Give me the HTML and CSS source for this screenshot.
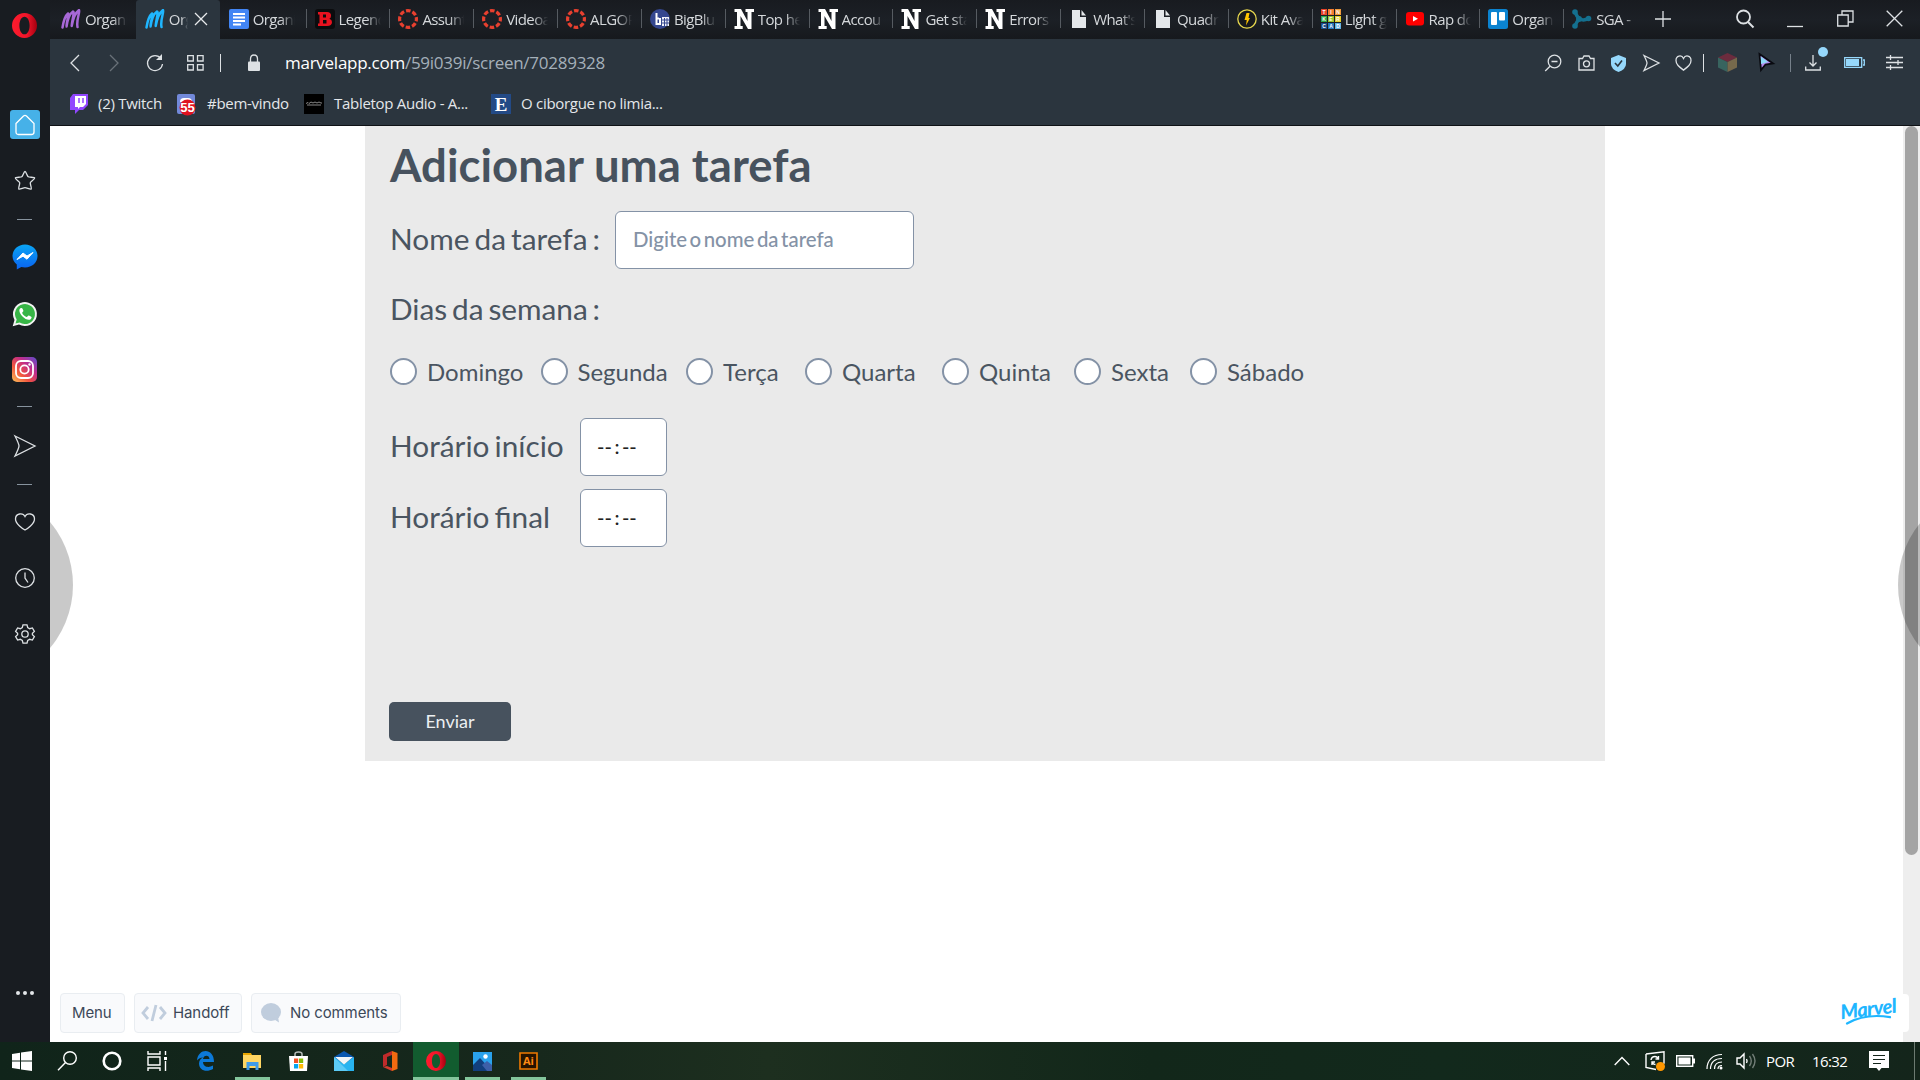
FILE: index.html
```html
<!DOCTYPE html>
<html lang="pt">
<head>
<meta charset="utf-8">
<title>Adicionar uma tarefa</title>
<link rel="stylesheet" href="styles.css">
</head>
<body>
<svg class="defs" width="0" height="0">
  <defs>
    <linearGradient id="ig" x1="0" y1="1" x2="1" y2="0"><stop offset="0" stop-color="#fdc45a"/><stop offset=".35" stop-color="#f0533f"/><stop offset=".65" stop-color="#c02c8c"/><stop offset="1" stop-color="#5a4fd0"/></linearGradient>
    <linearGradient id="ms" x1="0" y1="0" x2="0" y2="1"><stop offset="0" stop-color="#0aa5f5"/><stop offset="1" stop-color="#0a62f0"/></linearGradient>
    <linearGradient id="op" x1="0" y1="0" x2="1" y2="0"><stop offset="0" stop-color="#ff1b2d"/><stop offset=".6" stop-color="#f0152a"/><stop offset="1" stop-color="#a5000f"/></linearGradient>
    <symbol id="m" viewBox="0 0 20 20"><path d="M1.500 18.500C2.500 12 4 7 7 4.500c1.500 0-1.500 8-1.500 13C6.500 11 8.500 5 12 2.500c1.800 0-1 9-1.300 14.500C12 10 14 4 18 1c1.500.5-3 10-1.500 17" fill="none" stroke="currentColor" stroke-width="2.500" stroke-linecap="round" stroke-linejoin="round"/></symbol>
    <symbol id="canvas" viewBox="0 0 20 20"><circle cx="10" cy="10" r="8.400" fill="none" stroke="#e8402f" stroke-width="3.200" stroke-dasharray="4.600 2" stroke-dashoffset="2.300"/></symbol>
    <symbol id="n" viewBox="0 0 20 20"><path d="M.5 0H7l6.500 12V3h-2V0H20v3h-2.500v17H14L6.500 7v10h2.200v3H.5v-3H3V3H.5z" fill="#fff"/></symbol>
    <symbol id="file" viewBox="0 0 20 20"><path d="M3 1h8v7h6v11H3z" fill="#e4e7ea"/><path d="M12.500 1 17 6.500h-4.500z" fill="#e4e7ea"/></symbol>
    <symbol id="opera" viewBox="0 0 24 24"><path fill-rule="evenodd" d="M12 0a12 12 0 1 0 0 24 12 12 0 0 0 0-24zm0 3.500c3 0 4.900 3.800 4.900 8.500S15 20.500 12 20.500 7.100 16.700 7.100 12 9 3.500 12 3.500z" fill="url(#op)"/></symbol>
    <symbol id="send" viewBox="0 0 24 24"><path d="M2 2l20 10L2 22c2.500-5 4-8 4-10S4.500 7 2 2z"/></symbol>
    <symbol id="heart" viewBox="0 0 24 24"><path d="M12 21.500C6 17 2 14 2 8.500 2 2 9.500.5 12 6c2.500-5.500 10-4 10 2.500 0 5.500-4 8.500-10 13z"/></symbol>
  </defs>
</svg>
<div class="window">
  <aside class="side">
    <svg class="opera-logo" viewBox="0 0 24 24"><use href="#opera"/></svg>
    <div class="home"><svg class="ln" width="20" height="22" viewBox="0 0 20 22"><path d="M1 9.500 8.500 2Q10 .8 11.500 2L19 9.500V18q0 2.500-2.500 2.500h-13Q1 20.500 1 18z"/></svg></div>
    <svg class="ln star" width="22" height="22" viewBox="0 0 22 22"><path d="M11 1.500c1 0 2.200 4.600 3.200 5.300 1 .7 6.200.2 6.500 1.200.3 1-4 3.400-4.400 4.600-.4 1.200 1.700 5.900.8 6.500-.9.500-4.700-1.500-6.100-1.500s-5.200 2-6.100 1.500c-.9-.6 1.200-5.300.8-6.500C5.300 11.400 1 9 1.300 8c.3-1 5.500-.5 6.500-1.200 1-.7 2.200-5.300 3.200-5.300z"/></svg>
    <i class="dash d1"></i>
    <svg class="msg" width="26" height="26" viewBox="0 0 26 26"><path d="M13 .5C6 .5.500 5.500.500 12c0 3.500 1.700 6.500 4.300 8.500V25.500l4.500-2.500c1.200.3 2.400.5 3.700.5 7 0 12.500-5 12.500-11.500S20 .5 13 .5z" fill="url(#ms)"/><path d="M5 15.500 11 9l4 3 6-3.500-6 6.700-4-3z" fill="#fff" stroke="#fff"/></svg>
    <svg class="wa" width="26" height="26" viewBox="0 0 26 26"><path d="M.7 25.300 2.500 19A12 12 0 1 1 7 23.500z" fill="#f2f2f2"/><path d="M3.500 22.500 4.700 18.600a10 10 0 1 1 3 2.900z" fill="#37b546"/><path d="M9 7c-3 1-1.500 5.500 1.500 8.500s7.500 5 9 1.500c.4-1-.3-1.500-2.500-2.500-1.200-.5-1.500 1.800-2.500 1.500-2-.7-3.800-2.500-4.300-4 0-.9 1.500-1.300 1.200-2.200C11 8.500 10.500 6.700 9 7z" fill="#fff"/></svg>
    <svg class="insta" width="25" height="25" viewBox="0 0 25 25"><rect width="25" height="25" rx="5" fill="url(#ig)"/><g fill="none" stroke="#fff" stroke-width="1.800"><rect x="4" y="4" width="17" height="17" rx="5"/><circle cx="12.500" cy="12.500" r="4.200"/></g><circle cx="17.500" cy="7.500" r="1.200" fill="#fff"/></svg>
    <i class="dash d2"></i>
    <svg class="ln sd" width="24" height="24"><use href="#send"/></svg>
    <i class="dash d3"></i>
    <svg class="ln ht" width="22" height="20" viewBox="0 0 22 20"><path d="M11 18C9 17 1.500 12 1.500 7 1.500 1 9 .5 11 4.500 13 .5 20.500 1 20.500 7c0 5-7.500 10-9.500 11z"/></svg>
    <svg class="ln ck" width="22" height="22" viewBox="0 0 22 22"><circle cx="11" cy="11" r="9.300"/><path d="M11 5.500V11l3 4.500"/></svg>
    <svg class="ln gr" width="22" height="22" viewBox="0 0 22 22"><circle cx="11" cy="11" r="3.200"/><path d="M9 1.800h4l.7 2.700 2 1.200 2.700-.8 2 3.500-2 1.900v1.400l2 1.900-2 3.500-2.700-.8-2 1.200-.7 2.700H9l-.7-2.700-2-1.200-2.700.8-2-3.500 2-1.900v-1.400l-2-1.900 2-3.500 2.700.8 2-1.200z"/></svg>
    <svg class="dots" width="20" height="6" viewBox="0 0 20 6"><g fill="#e3e6e9"><circle cx="3" cy="3" r="2"/><circle cx="10" cy="3" r="2"/><circle cx="17" cy="3" r="2"/></g></svg>
  </aside>
  <div class="main">
    <header class="tabs">
      <div class="tab purple"><svg><use href="#m"/></svg><span>Organi</span></div>
      <div class="tab active"><svg><use href="#m"/></svg><span>Org</span><svg class="x" viewBox="0 0 14 14"><path d="M1 1l12 12M13 1 1 13" stroke="#e8eaec" stroke-width="1.300"/></svg></div>
      <div class="tab"><svg viewBox="0 0 20 20"><rect width="20" height="20" rx="2" fill="#4285f4"/><path d="M4 5h12M4 8.500h12M4 12h12M4 15.500h8" stroke="#fff" stroke-width="1.800"/></svg><span>Organi</span></div>
      <div class="tab sep"><svg viewBox="0 0 20 20"><rect width="20" height="20" rx="3" fill="#0b0c0e"/><path fill-rule="evenodd" d="M3 3h9q4 0 4 3.700 0 2.300-1.600 3Q17 10.500 17 13q0 4-5 4H3v-2.500h1.500v-9H3zm5 2.500v3h3V5.500zm0 5.500v3.500h3.500V11z" fill="#e8121f"/></svg><span>Legend</span></div>
      <div class="tab sep"><svg><use href="#canvas"/></svg><span>Assunt</span></div>
      <div class="tab sep"><svg><use href="#canvas"/></svg><span>Videoa</span></div>
      <div class="tab sep"><svg><use href="#canvas"/></svg><span>ALGOR</span></div>
      <div class="tab sep"><svg viewBox="0 0 20 20"><circle cx="10" cy="10" r="10" fill="#35478f"/><path d="M6.500 4v11h3.500V9M6.500 9.500H9" stroke="#fff" stroke-width="2" fill="none"/><path d="M12 8h7v9h-7z" fill="#f0f2fa"/><path d="M12 11h7M12 14h7M14.500 9v8M17 9v8" stroke="#35478f"/></svg><span>BigBlu</span></div>
      <div class="tab sep"><svg><use href="#n"/></svg><span>Top he</span></div>
      <div class="tab sep"><svg><use href="#n"/></svg><span>Accou</span></div>
      <div class="tab sep"><svg><use href="#n"/></svg><span>Get sta</span></div>
      <div class="tab sep"><svg><use href="#n"/></svg><span>Errors</span></div>
      <div class="tab sep"><svg><use href="#file"/></svg><span>What's</span></div>
      <div class="tab sep"><svg><use href="#file"/></svg><span>Quadr</span></div>
      <div class="tab sep"><svg viewBox="0 0 20 20"><circle cx="10" cy="10" r="9.200" fill="#17191c" stroke="#e6d74e" stroke-width="1.300"/><path d="M9.500 4h3L11.500 9H13l-4 7.500.7-5.500H7.500z" fill="#ffc400"/></svg><span>Kit Ava</span></div>
      <div class="tab sep"><svg viewBox="0 0 20 20"><path fill="#e8452b" d="M0 0h6v6H0z"/><path fill="#f47b30" d="M7 0h6v6H7z"/><path fill="#f19a3c" d="M14 0h6v6h-6z"/><path fill="#2fa84b" d="M0 7h6v6H0z"/><path fill="#9cc62f" d="M7 7h6v6H7z"/><path fill="#e4d02c" d="M14 7h6v6h-6z"/><path fill="#174d8c" d="M0 14h6v6H0z"/><path fill="#2277bd" d="M7 14h6v6H7z"/><path fill="#5fb2e2" d="M14 14h6v6h-6z"/><g class="tk"><text x="3" y="5">T</text><text x="10" y="5">I</text><text x="17" y="5">N</text><text x="3" y="12">K</text><text x="10" y="12">E</text><text x="17" y="12">R</text><text x="3" y="19">C</text><text x="10" y="19">A</text><text x="17" y="19">D</text></g></svg><span>Light g</span></div>
      <div class="tab sep"><svg viewBox="0 0 20 20"><rect x="1" y="3" width="18" height="13.500" rx="3" fill="#f00"/><path d="M8 7l5 2.800-5 2.800z" fill="#fff"/></svg><span>Rap do</span></div>
      <div class="tab sep"><svg viewBox="0 0 20 20"><rect width="20" height="20" rx="2.500" fill="#0b83d0"/><rect x="3" y="3" width="6" height="13" rx="1" fill="#fff"/><rect x="11" y="3" width="6" height="8.500" rx="1" fill="#fff"/></svg><span>Organi</span></div>
      <div class="tab sep"><svg viewBox="0 0 20 20"><path d="M3 3q2 5 4.500 7Q5 12 3 17M7.500 10Q12 12 16 9.500" stroke="#14708f" stroke-width="3.500" fill="none"/><g fill="#14708f"><circle cx="3" cy="3" r="2.800"/><circle cx="3" cy="17" r="2.800"/><circle cx="7" cy="10" r="3"/><circle cx="16.500" cy="9.500" r="2.800"/></g></svg><span>SGA -</span></div>
      <div class="controls">
        <svg class="ln" width="16" height="16" viewBox="0 0 16 16"><path d="M8 0v16M0 8h16"/></svg>
        <b></b>
        <svg class="ln" width="20" height="20" viewBox="0 0 20 20"><circle cx="8.500" cy="8" r="6.500" stroke-width="1.800"/><path d="M13 13l5.500 5.500" stroke-width="2"/></svg>
        <svg class="ln" width="16" height="16" viewBox="0 0 16 16"><path d="M0 15.500h16"/></svg>
        <svg class="ln" width="17" height="17" viewBox="0 0 17 17"><path d="M.7 5h10.500v11H.7zM5 5V1h11v11h-4.500"/></svg>
        <svg class="ln" width="17" height="17" viewBox="0 0 17 17"><path d="M.7.700l15.600 15.600M16.300.700.700 16.300"/></svg>
      </div>
    </header>
    <nav class="bar">
      <svg class="ln" width="12" height="18" viewBox="0 0 12 18"><path d="M10 1 2 9l8 8"/></svg>
      <svg class="ln off" width="12" height="18" viewBox="0 0 12 18"><path d="M2 1l8 8-8 8"/></svg>
      <svg class="ln" width="18" height="18" viewBox="0 0 18 18"><path d="M15 4.500A7.500 7.500 0 1 0 16.500 10"/><path d="M16 0v6h-6z" fill="#dde1e4" stroke="none"/></svg>
      <svg class="ln" width="17" height="16" viewBox="0 0 17 16"><path d="M.7.700h5.600v5.300H.7zM10.500.700h5.600v5.300h-5.600zM.7 9.700h5.600V15H.7zM10.500 9.700h5.600V15h-5.600z"/></svg>
      <i class="vl"></i>
      <svg width="14" height="18" viewBox="0 0 14 18"><path d="M3.500 8V5q0-4 3.500-4t3.500 4v3" fill="none" stroke="#dde1e4" stroke-width="1.300"/><rect x="1" y="7.500" width="12" height="9.500" rx="1" fill="#dde1e4"/></svg>
      <div class="url">marvelapp.com<em>/59i039i/screen/70289328</em></div>
      <div class="ext">
        <svg class="ln" width="18" height="18" viewBox="0 0 18 18"><circle cx="10.500" cy="7.500" r="6.300"/><path d="M6 12.200 1.200 17M7.500 7.500h6"/></svg>
        <svg class="ln" width="17" height="16" viewBox="0 0 17 16"><path d="M1 3.500h3.500L6 1h5l1.500 2.500H16V15H1z"/><circle cx="8.500" cy="8.800" r="3"/></svg>
        <svg class="shield" width="15" height="17" viewBox="0 0 15 17"><path d="M7.500 0 15 3v6q0 5-7.500 8Q0 14 0 9V3z" fill="#96d8fb"/><path d="M4 8l2.800 3L11 5.500" fill="none" stroke="#2b353e" stroke-width="1.600"/></svg>
        <svg class="ln fat" width="19" height="18"><use href="#send"/></svg>
        <svg class="ln fat" width="19" height="18"><use href="#heart"/></svg>
        <i class="vl"></i>
        <svg width="19" height="19" viewBox="0 0 19 19"><path d="M9.500 0 19 4.500 9.500 9 0 4.500z" fill="#6c2c3e"/><path d="M0 4.500 9.500 9v10L0 14.500z" fill="#38645f"/><path d="M19 4.500 9.500 9v10l9.500-4.500z" fill="#76694c"/></svg>
        <svg class="cur" width="18" height="20" viewBox="0 0 18 20"><path d="M2.500 2 16 11.500 8.500 12.500 4 18z" fill="#b58bf0" stroke="#090a10" stroke-width="1.800"/><path d="M3.800 4.500 11 10l-7 2z" fill="#8fdcf8"/></svg>
        <i class="vl dim"></i>
        <div class="dl"><svg class="ln" width="16" height="16" viewBox="0 0 16 16"><path d="M8 0v11M4.500 7.500 8 11l3.500-3.500M.7 11.500V15h14.600v-3.500"/></svg><i></i></div>
        <svg width="21" height="11" viewBox="0 0 21 11"><path d="M.7.700h17v9.600H.7zM19 3h1.300v5H19" fill="none" stroke="#96d8fb" stroke-width="1.300"/><path d="M2 2h13v7H2z" fill="#96d8fb"/></svg>
        <svg class="ln" width="17" height="15" viewBox="0 0 17 15"><path d="M0 2.500h17M0 7.500h17M0 12.500h17M4.500 0v5M12 5v5M4.500 10v5"/></svg>
      </div>
    </nav>
    <nav class="marks">
      <div class="mk k1"><svg width="19" height="20" viewBox="0 0 19 20"><path d="M4 0h15v11l-5 5h-4l-4 4v-4H1V4z" fill="#9147ff"/><path d="M6 2h11v8l-3 3h-3l-2 2v-2H6z" fill="#fff"/><path d="M10 4v5M14 4v5" stroke="#9147ff" stroke-width="1.500"/></svg><span>(2) Twitch</span></div>
      <div class="mk k2"><svg width="20" height="20" viewBox="0 0 20 20"><rect width="18" height="20" rx="2" fill="#7289da"/><path d="M3 8q0-4 4-4h4q4 0 4 4z" fill="#fff"/><circle cx="10.500" cy="13.500" r="8" fill="#e01220"/><text x="10.500" y="18.300">55</text></svg><span>#bem-vindo</span></div>
      <div class="mk k3"><svg width="20" height="20" viewBox="0 0 20 20"><path d="M0 0h20v20H0z" fill="#000"/><path d="M2 9.500l2-1 1 1 2-1.500 2 1 2-1 2 1 2-1 2 1 1 0M3 11h14" stroke="#888" fill="none"/></svg><span>Tabletop Audio - A...</span></div>
      <div class="mk k4"><svg width="20" height="20" viewBox="0 0 20 20"><path d="M0 0h20v20H0z" fill="#234a86"/><text class="e" x="10" y="16.500">E</text></svg><span>O ciborgue no limia...</span></div>
    </nav>
    <main class="page">
      <section class="form">
        <h1>Adicionar uma tarefa</h1>
        <div class="row name"><label>Nome da tarefa :</label><div class="box wide">Digite o nome da tarefa</div></div>
        <p class="days-title">Dias da semana :</p>
        <div class="days">
          <label><i></i><span>Domingo</span></label><label><i></i><span>Segunda</span></label><label><i></i><span>Terça</span></label><label><i></i><span>Quarta</span></label><label><i></i><span>Quinta</span></label><label><i></i><span>Sexta</span></label><label><i></i><span>Sábado</span></label>
        </div>
        <div class="row time"><label>Horário início</label><div class="box">--&thinsp;:&thinsp;--</div></div>
        <div class="row time"><label>Horário final</label><div class="box">--&thinsp;:&thinsp;--</div></div>
        <div class="submit">Enviar</div>
      </section>
      <footer class="foot">
        <div class="chip c1">Menu</div>
        <div class="chip c2"><svg width="26" height="18" viewBox="0 0 26 18"><path d="M7 3 2 9l5 6M19 3l5 6-5 6M15 1l-4 16" fill="none" stroke="#c0cddd" stroke-width="2.800"/></svg>Handoff</div>
        <div class="chip c3"><svg width="20" height="20" viewBox="0 0 20 20"><ellipse cx="10" cy="9" rx="10" ry="9" fill="#c0cddd"/><path d="M11 15l7 4.500-1-6z" fill="#c0cddd"/></svg>No comments</div>
      </footer>
      <div class="scroll"><i></i></div>
      <i class="hot left"></i><i class="hot right"></i>
      <div class="brand"><span>Marvel</span><svg width="48" height="12" viewBox="0 0 48 12"><path d="M1 9.500Q20-1 44 3.200" fill="none" stroke="#1fb6ff" stroke-width="2.200" stroke-linecap="round"/></svg></div>
    </main>
  </div>
</div>
<footer class="task">
  <div class="ti s"><svg width="20" height="20" viewBox="0 0 20 20"><path d="M0 3l8-1.200V9.500H0zM9 1.600 20 0v9.500H9zM0 10.500h8v7.700L0 17zM9 10.500h11V20L9 18.400z" fill="#fff"/></svg></div>
  <div class="ti s"><svg class="wt" width="20" height="20" viewBox="0 0 20 20"><circle cx="13" cy="7" r="6.300"/><path d="M8.500 11.500 1 19.300"/></svg></div>
  <div class="ti s"><svg class="wt" width="20" height="20" viewBox="0 0 20 20"><circle cx="10" cy="10" r="8.300" stroke-width="2.600"/></svg></div>
  <div class="ti s"><svg class="wt" width="21" height="20" viewBox="0 0 21 20"><path d="M1 0v3h12V0M1 20v-3h12v3M1 6h12v8H1zM18.500 0v4M18.500 10v10"/><path d="M17 6h3v3h-3z" fill="#fff" stroke="none"/></svg></div>
  <div class="ti edge"><svg width="18" height="20" viewBox="0 0 18 20"><path d="M0 9.500C1-3 17-3.500 17 11H6c.3 5.500 6 6 10 3.500V18C9 22 2 19 2 12.500c0-3 1.800-5 4-6C3 6.500 1 8 0 9.500zM6 8h6.500C12.500 3.500 6.500 3.500 6 8z" fill="#0c79d8" fill-rule="evenodd"/></svg></div>
  <div class="ti run"><svg width="19" height="18" viewBox="0 0 19 18"><path d="M0 1h8l1 2H0z" fill="#e8a500"/><path d="M0 3h18v13H0z" fill="#ffd663"/><path d="M3.500 18v-8h12v8h-3v-4h-6v4z" fill="#3f9be8"/></svg></div>
  <div class="ti"><svg width="19" height="20" viewBox="0 0 19 20"><path d="M6 6V3q0-2 3.500-2T13 3v3" stroke="#b5bcb8" stroke-width="1.500" fill="none"/><path d="M0 5h19l-1 15H1z" fill="#fff"/><path d="M5 7.500h4.200V12H5z" fill="#f35325"/><path d="M10 7.500h4.200V12H10z" fill="#81bc06"/><path d="M5 13h4.200v4.500H5z" fill="#05a6f0"/><path d="M10 13h4.200v4.500H10z" fill="#ffba08"/></svg></div>
  <div class="ti"><svg width="20" height="20" viewBox="0 0 20 20"><path d="M0 6 10 0l10 6v4H0z" fill="#0b58b0"/><path d="M0 6l10 7 10-7v14H0z" fill="#28b4f0"/><path d="M0 6l14 14H0z" fill="#5ccbf6"/><path d="M1 6h18l-9 7.500z" fill="#f2f6f8"/></svg></div>
  <div class="ti"><svg width="16" height="20" viewBox="0 0 16 20"><path d="M10 0 1 4v12l4-2V6l5-2z" fill="#c02b2b"/><path d="M10 0l5.500 2v16L10 20z" fill="#f26a10"/><path d="M1 16l9 4v-3l-5-2z" fill="#d23a2e"/></svg></div>
  <div class="ti run on"><svg width="20" height="20"><use href="#opera"/></svg></div>
  <div class="ti run"><svg width="19" height="19" viewBox="0 0 19 19"><path d="M0 0h19v19H0z" fill="#2aa2ec"/><path d="M0 13 7 6l12 13H0z" fill="#123f7d"/><path d="M9 13l5-4 5 4v6h-5z" fill="#3d5fa8"/><circle cx="12.500" cy="4.500" r="2.200" fill="#fff"/></svg></div>
  <div class="ti run"><svg width="19" height="18" viewBox="0 0 19 18"><path d="M1 1h17v16H1z" fill="#261300" stroke="#f07a00" stroke-width="1.600"/><text class="ai" x="9.500" y="13">Ai</text></svg></div>
  <div class="tray">
    <svg class="wt" width="16" height="10" viewBox="0 0 16 10"><path d="M.7 9 8 1.500 15.300 9"/></svg>
    <svg class="wt" width="20" height="20" viewBox="0 0 20 20"><path d="M1 3 19 .8v12M11 18.500 1 16.500V3"/><path d="M6 9q.5-3.500 4-3.500 2 0 3 2M13.500 5v3h-3M7 14v-3h3M7.500 12q1 1.500 3 1.500"/><circle cx="15.500" cy="15.500" r="4.500" fill="#ff9800" stroke="none"/></svg>
    <svg class="wt" width="19" height="12" viewBox="0 0 19 12"><path d="M.7.700h16v10.600h-16z"/><path d="M2.500 2.500h12v7h-12zM17 3.500h2v5h-2z" fill="#fff" stroke="none"/></svg>
    <svg class="wt" width="17" height="17" viewBox="0 0 17 17"><path d="M1 16C1 7 7 1.500 16 1.500M4.500 16C4.500 9 9 5.500 16 5.500M8.500 16c0-4.500 3-7 7.500-7M12 16q0-3.500 4-3.500" stroke-width="1.200"/><circle cx="15" cy="15" r="1.500" fill="#fff" stroke="none"/></svg>
    <svg class="wt" width="20" height="18" viewBox="0 0 20 18"><path d="M1 6h3l4-4v14l-4-4H1zM10.500 7q1.200 2 0 4"/><path d="M13.500 4q3.500 5 0 10M16.500 2q5 7 0 14" opacity=".4"/></svg>
    <span class="lang">POR</span><span class="clock">16:32</span>
    <svg class="note" width="20" height="20" viewBox="0 0 20 20"><path d="M0 0h20v17h-7.500L10 20l-2.500-3H0z" fill="#fff"/><path d="M4 4.500h12M4 8.500h12M4 12.500h8" stroke="#14251b" stroke-width="1.200"/></svg>
    <i class="desk"></i>
  </div>
</footer>
</body>
</html>
```
FILE: styles.css
```css
* { box-sizing: border-box; }
body { margin: 0; width: 1920px; height: 1080px; overflow: hidden; background: #181c21; font-family: "Open Sans", "Noto Sans", sans-serif; color: #e4e7ea; }
svg { display: block; overflow: visible; flex: none; }
.defs { position: absolute; }
.ln { fill: none; stroke: #dde1e4; stroke-width: 1.3; }
.fat { stroke-width: 1.7; }
.window { display: flex; height: 1042px; }

.side { width: 50px; padding-right: 1px; display: flex; flex-direction: column; align-items: center; background: #181c21; }
.opera-logo { width: 25px; height: 25px; margin: 13px 0 72px; }
.home { width: 30px; height: 29px; border-radius: 3px; background: #46b1e8; display: flex; align-items: center; justify-content: center; }
.home svg { stroke: #fff; }
.star { margin-top: 31px; }
.dash { width: 15px; height: 1px; background: #87939e; flex: none; }
.d1 { margin-top: 27px; }
.msg { margin-top: 24px; }
.wa { margin-top: 31px; }
.insta { margin-top: 30px; }
.d2 { margin-top: 24px; }
.sd { margin-top: 27px; }
.d3 { margin-top: 26px; }
.ht { margin-top: 27px; }
.ck { margin-top: 35px; }
.gr { margin-top: 34px; }
.dots { margin-top: 345px; }

.main { width: 1870px; display: flex; flex-direction: column; }
.tabs { height: 39px; display: flex; padding-left: 2px; background: linear-gradient(#181b20, #1c2026 50%, #16191d); }
.tab { width: 83.85px; height: 39px; padding: 0 0 1px 9px; display: flex; align-items: center; gap: 4px; flex: none; color: #d5d8db; font-size: 15px; }
.tab svg { width: 20px; height: 20px; }
.tab span { width: 42px; overflow: hidden; white-space: nowrap; letter-spacing: -.6px; margin-top: -1px; -webkit-mask-image: linear-gradient(90deg, #000 65%, transparent); mask-image: linear-gradient(90deg, #000 65%, transparent); }
.tab.sep { padding-left: 11px; background: linear-gradient(#565b61, #565b61) 2px 9px / 1px 19px no-repeat; }
.purple svg { color: #a869d8; }
.active { background: #2b353e; border-radius: 3px 3px 0 0; }
.active svg { color: #1fb6ff; }
.active span { width: 19px; }
.tab .x { width: 14px; height: 14px; margin-left: 2px; }
.tk text { font: bold 5px "Liberation Sans", sans-serif; fill: #fff; text-anchor: middle; }
.controls { display: grid; grid-template-columns: 36px 40px 48px 52px 48px 51px; align-items: center; justify-items: center; padding-bottom: 2px; }

.bar { height: 47px; background: #2b353e; display: grid; grid-template-columns: 50px 28px 54px 26px 24px 44px 1261px 383px; align-items: center; justify-items: center; }
.off { opacity: .35; }
.vl { width: 1px; height: 18px; background: #dde1e4; }
.dim { background: #76808a; }
.url { justify-self: start; padding-left: 9px; font-size: 17px; letter-spacing: -.26px; color: #fff; }
.url em { font-style: normal; color: #a5b0ba; }
.ext { display: grid; grid-template-columns: 32px 34px 30px 36px 28px 12px 36px 42px 6px 40px 42px 38px; align-items: center; justify-items: center; width: 383px; }
.shield { margin-top: 2px; }
.cur { margin-bottom: 2px; }
.dl { position: relative; }
.dl i { position: absolute; left: 13px; top: -8px; width: 10px; height: 10px; border-radius: 50%; background: #96d8fb; }

.marks { height: 40px; background: #2b353e; border-bottom: 1px solid #0f1216; display: flex; align-items: flex-start; padding: 5px 0 0 19px; font-size: 15px; }
.mk { display: flex; align-items: center; height: 26px; gap: 10px; white-space: nowrap; }
.mk span { letter-spacing: -.29px; margin-top: -2px; }
.k1 { width: 108px; }
.k2 { width: 127px; }
.k3 { width: 187px; }
.mk text { font: bold 13px "Liberation Sans", sans-serif; fill: #fff; text-anchor: middle; }
.mk .e { font: bold 19px "Liberation Serif", serif; }

.page { height: 916px; background: #fff; position: relative; overflow: hidden; font-family: Lato, sans-serif; color: #4a5561; }
.form { width: 1240px; height: 635px; margin-left: 315px; padding: 12px 0 0 25px; background: #eaeaea; }
h1 { margin: 0; font-size: 45.5px; line-height: 54px; font-weight: 700; color: #47525e; white-space: nowrap; }
.row { display: flex; align-items: center; height: 58px; font-size: 29.8px; word-spacing: -2.6px; white-space: nowrap; }
.row label { padding-bottom: 3px; }
.name { margin-top: 19px; }
.name label { width: 225px; }
.box { width: 87px; height: 58px; border: 1px solid #8492a6; border-radius: 6px; background: #fff; padding: 0 0 3px 16px; display: flex; align-items: center; font-size: 20px; font-weight: 500; color: #222; }
.wide { width: 299px; padding-left: 17px; font-size: 20.4px; color: #8492a6; }
.days-title { margin: 22px 0 0; font-size: 29.8px; line-height: 36px; word-spacing: -2.8px; }
.days { display: grid; grid-template-columns: 150.5px 145.5px 119px 137px 132px 116px 120px; margin-top: 29px; height: 31px; font-size: 24px; }
.days label { display: flex; align-items: center; gap: 10px; }
.days i { width: 27px; height: 27px; border: 2.5px solid #8492a6; border-radius: 50%; background: #fff; }
.time { margin-bottom: 13px; }
.time label { width: 190px; }
.days + .time { margin-top: 31px; }
.submit { width: 122px; height: 39px; margin: 155px 0 0 -1px; padding-bottom: 1px; background: #47525e; border-radius: 5px; color: #eceff2; font-size: 18px; display: flex; align-items: center; justify-content: center; }

.foot { display: flex; gap: 9px; margin: 232px 0 0 10px; font-family: Inter, sans-serif; font-size: 15px; letter-spacing: -.1px; color: #3c4858; }
.chip { height: 40px; padding-bottom: 1px; display: flex; align-items: center; border: 1px solid #e9edf1; border-radius: 4px; background: #f9fafc; white-space: nowrap; }
.c1 { width: 65px; padding-left: 11px; }
.c2 { width: 108px; padding-left: 6px; gap: 6px; }
.c3 { width: 150px; padding-left: 9px; gap: 9px; }
.scroll { position: absolute; right: 0; top: 0; width: 17px; height: 916px; background: #eee; padding: 0 2px; }
.scroll i { display: block; width: 13px; height: 729px; border-radius: 7px; background: #a4a4a4; }
.hot { position: absolute; top: 361px; width: 196px; height: 196px; border-radius: 50%; background: rgba(0, 0, 0, .21); }
.left { left: -173px; }
.right { right: -174px; }
.brand { position: absolute; left: 1780px; top: 868px; width: 79px; height: 38px; background: #fff; border-radius: 4px; color: #1fb6ff; }
.brand span { position: absolute; left: 10px; top: 3px; font: italic 900 20px/22px Lato, sans-serif; letter-spacing: -.6px; transform: rotate(-7deg); }
.brand svg { position: absolute; left: 16px; top: 20px; }

.task { height: 38px; display: flex; background: linear-gradient(90deg, #10241a, #17281c 28%, #1d2f1f 40%, #12271a 60%, #12291c 75%, #14251b); }
.ti { width: 46px; height: 38px; display: flex; align-items: center; justify-content: center; flex: none; }
.ti.s { width: 45px; padding-right: 1px; }
.edge { margin-left: 3px; }
.wt { fill: none; stroke: #fff; stroke-width: 1.4; }
.run { background: linear-gradient(#84c69c, #84c69c) 6px 35px / 35px 3px no-repeat; }
.run.on { background: linear-gradient(#84c69c, #84c69c) 0 35px / 46px 3px no-repeat #125c2f; }
.ai { font: bold 11px "Open Sans", sans-serif; fill: #ff8a14; text-anchor: middle; }
.tray { margin-left: auto; width: 312px; display: grid; grid-template-columns: 31px 31px 30px 30px 36px 46px 49px 36px 23px; align-items: center; font-size: 15px; color: #fff; }
.tray svg { justify-self: start; }
.tray .wt { margin-left: 6px; }
.tray .note { margin-left: 8px; }
.lang, .clock { letter-spacing: -.6px; }
.desk { width: 1px; height: 38px; background: #6c7a71; margin-left: 17px; }
```
